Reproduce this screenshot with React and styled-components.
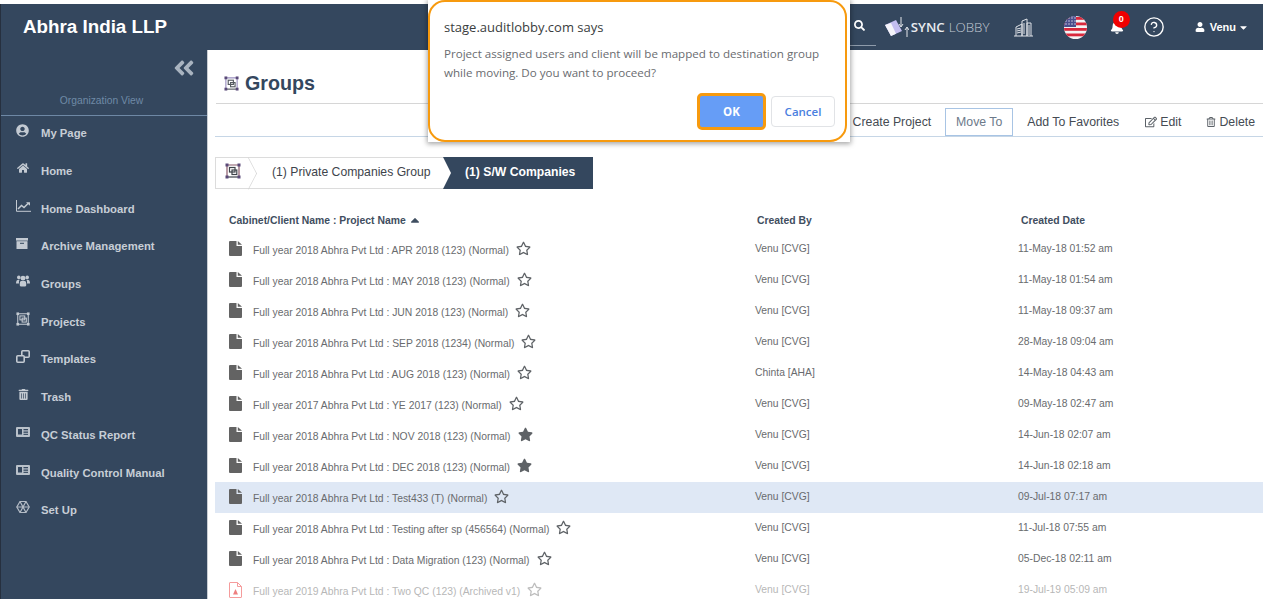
import styled, {createGlobalStyle} from 'styled-components';
import {FaUserCircle, FaHome, FaTrashAlt, FaSearch, FaBell, FaUser, FaCaretDown, FaCaretUp, FaStar, FaRegStar, FaAngleDoubleLeft, FaRegEdit, FaRegTrashAlt} from 'react-icons/fa';
import {CircleHelp} from 'lucide-react';

const navy = '#34475e';
const navIconColor = '#c3cad2';

const GlobalStyle = createGlobalStyle`
  html, body {
    margin: 0;
    height: 100%;
    overflow: hidden;
    background: #fff;
    font-family: "Liberation Sans", Arial, sans-serif;
  }
`

const Page = styled.div`
  position: relative;
  width: 1263px;
  height: 599px;
  padding-top: 4px;
  box-sizing: border-box;
  overflow: hidden;
  display: flex;
  flex-direction: column;
`

const Header = styled.header`
  flex: 0 0 46px;
  display: flex;
  align-items: center;
  background: ${navy};
  border-left: 1px solid #26303f;
  color: #fff;
  padding-left: 22px;
`

const Brand = styled.div`
  font-size: 18.8px;
  font-weight: 700;
  width: 400px;
`

const HeaderTools = styled.div`
  margin-left: auto;
  display: flex;
  align-items: center;
  height: 100%;
`

const SearchBox = styled.div`
  width: 37px;
  height: 37px;
  box-sizing: border-box;
  border-bottom: 1px solid #8e9bab;
  display: flex;
  align-items: center;
  justify-content: flex-end;
  padding: 0 11px 3px 0;
  font-size: 11px;
  margin: 0 8px 0 0;
`

const SyncLogo = styled.div`
  display: flex;
  align-items: center;
  font-family: "Open Sans", sans-serif;
  font-size: 13.3px;
  font-weight: 600;
  width: 108px;
  color: #e8ebef;
  span { font-weight: 300; color: #c4cbd4; margin-left: 4px; }
  svg { margin-right: 2px; }
`

const ToolIcon = styled.div`
  position: relative;
  display: flex;
  align-items: center;
  justify-content: center;
  margin-left: ${props => props.$gap}px;
  font-size: ${props => props.$size || 16}px;
`

const Badge = styled.div`
  position: absolute;
  top: -9px;
  left: 3px;
  width: 17px;
  height: 17px;
  border-radius: 50%;
  background: #f00000;
  color: #fff;
  font-size: 9px;
  font-weight: 700;
  line-height: 17px;
  text-align: center;
`

const UserMenu = styled.div`
  display: flex;
  align-items: center;
  gap: 4px;
  margin: 0 14px 0 30px;
  font-size: 11px;
  font-weight: 700;
  svg:first-child { font-size: 10px; margin-right: 1px; }
  svg:last-child { font-size: 11px; margin-left: -2px; }
`

const Body = styled.div`
  flex: 1;
  display: flex;
  min-height: 0;
`

const Sidebar = styled.aside`
  flex: 0 0 207px;
  box-sizing: border-box;
  background: ${navy};
  border-left: 1px solid #26303f;
  color: #c4ccd5;
`

const Collapse = styled.div`
  height: 37px;
  box-sizing: border-box;
  padding: 0 11px 2px 0;
  display: flex;
  justify-content: flex-end;
  align-items: center;
  font-size: 24px;
  color: #a9b4c0;
`

const OrgView = styled.div`
  height: 29px;
  box-sizing: border-box;
  border-bottom: 1px solid #6e88a5;
  padding-right: 5px;
  text-align: center;
  font-size: 10.3px;
  line-height: 28px;
  color: #6f8aa6;
`

const NavList = styled.nav`
  margin-top: -1.5px;
`

const NavItem = styled.div`
  height: 37.7px;
  display: flex;
  align-items: center;
  padding-left: 15px;
  font-size: 11.3px;
  font-weight: 700;
  color: #c7ced6;
`

const NavIcon = styled.span`
  width: 25px;
  flex: none;
  display: flex;
  position: relative;
  top: -3px;
  font-size: 12px;
  color: ${navIconColor};
`

const Main = styled.main`
  flex: 1;
  min-width: 0;
  padding-left: 7px;
  border-left: 1px solid #c9ced4;
`

const TitleBar = styled.div`
  height: 54px;
  box-sizing: border-box;
  padding: 22px 0 0 8px;
  margin-left: 1px;
  display: flex;
  align-items: flex-start;
  gap: 6px;
  border-bottom: 1px solid #d6d6d6;
  svg { margin-top: 4px; }
`

const Title = styled.h1`
  margin: 0;
  font-size: 19.7px;
  line-height: 22px;
  font-weight: 700;
  color: ${navy};
`

const Toolbar = styled.div`
  height: 33px;
  box-sizing: border-box;
  padding: 3px 8px 0 0;
  border-bottom: 1px solid #c6d6e6;
  display: flex;
  justify-content: flex-end;
  align-items: center;
  font-size: 12.3px;
  color: #454b53;
`

const ToolButton = styled.div`
  display: flex;
  align-items: center;
  gap: 3px;
  margin-left: ${props => props.$gap}px;
  svg { font-size: 12px; color: #5c6268; }
`

const MoveTo = styled.div`
  box-sizing: border-box;
  height: 28px;
  width: 68px;
  line-height: 26px;
  text-align: center;
  margin-left: 14px;
  border: 1px solid #a8c4e4;
  color: #6d7a8a;
`

const Crumbs = styled.div`
  margin-top: 20px;
  width: 378px;
  height: 32px;
  box-sizing: border-box;
  display: flex;
  border: 1px solid #dcdcdc;
  font-size: 12.2px;
  color: #3e444b;
`

const CrumbHome = styled.div`
  position: relative;
  width: 34px;
  flex: none;
  display: flex;
  align-items: center;
  padding: 0 0 5px 9px;
  box-sizing: border-box;
  &::after {
    content: '';
    position: absolute;
    right: -10px;
    top: 4px;
    width: 22px;
    height: 22px;
    border-top: 1px solid #d4d4d4;
    border-right: 1px solid #d4d4d4;
    transform: scaleX(0.52) rotate(45deg);
  }
`

const CrumbLink = styled.div`
  width: 193px;
  line-height: 29px;
  padding-left: 22px;
  box-sizing: border-box;
`

const CrumbActive = styled.div`
  flex: 1;
  background: ${navy};
  color: #fff;
  font-weight: 700;
  padding-left: 22px;
  clip-path: polygon(0 0, 100% 0, 100% 100%, 0 100%, 8px 50%);
  margin: -1px -1px -1px 0;
  line-height: 31px;
`

const TableHead = styled.div`
  display: grid;
  grid-template-columns: 528px 264px 1fr;
  margin-top: 18px;
  padding: 0 0 1px 14px;
  box-sizing: border-box;
  height: 27px;
  font-size: 10.4px;
  font-weight: 700;
  color: #3f4e60;
  align-items: center;
`

const SortName = styled.div`
  display: flex;
  align-items: center;
  gap: 2px;
  svg { font-size: 14px; }
`

const Row = styled.div`
  display: grid;
  grid-template-columns: 526px 263px 1fr;
  height: 31px;
  align-items: center;
  padding-left: 14px;
  background: ${props => props.$selected ? '#dfe8f5' : 'transparent'};
  font-size: 10.35px;
  color: ${props => props.$archived ? '#b7b7b7' : '#696b6e'};
`

const NameCell = styled.div`
  display: flex;
  align-items: center;
  padding-top: 2px;
`

const MetaCell = styled.div`
  padding-bottom: 2px;
`

const DocIcon = styled.span`
  width: 24px;
  flex: none;
  display: flex;
  position: relative;
  top: -2px;
`

const StarIcon = styled.span`
  display: flex;
  margin-left: 7px;
  position: relative;
  top: -2px;
  font-size: 15px;
  color: ${props => props.$archived ? '#bdbdbd' : '#5e6266'};
`

const Dialog = styled.div`
  position: absolute;
  left: 428px;
  top: 0;
  width: 422px;
  height: 142px;
  box-sizing: border-box;
  padding-right: 3px;
  background: #fff;
  box-shadow: 0 1px 5px 1px rgba(0,0,0,0.35);
`

const DialogRing = styled.div`
  height: 100%;
  box-sizing: border-box;
  border: 2px solid #f79a0e;
  border-radius: 17px;
  padding: 16px 10px 0 14px;
  font-family: "Open Sans", sans-serif;
`

const DialogTitle = styled.div`
  font-size: 13px;
  line-height: 18px;
  color: #3a3d40;
`

const DialogText = styled.div`
  margin-top: 9px;
  font-size: 11.6px;
  line-height: 18.5px;
  color: #6a6c70;
  white-space: nowrap;
`

const DialogActions = styled.div`
  margin-top: 11px;
  display: flex;
  justify-content: flex-end;
  align-items: center;
  gap: 5px;
`

const OkButton = styled.div`
  box-sizing: border-box;
  width: 69px;
  height: 37px;
  border: 3px solid #f79a0e;
  border-radius: 5px;
  background: #669df6;
  color: #fff;
  font-size: 11.5px;
  font-weight: 700;
  line-height: 31px;
  text-align: center;
`

const CancelButton = styled.div`
  box-sizing: border-box;
  width: 64px;
  height: 31px;
  border: 1px solid #e1e3e6;
  border-radius: 4px;
  color: #4a80e0;
  font-size: 11.5px;
  font-weight: 600;
  line-height: 29px;
  text-align: center;
`

const GroupGlyph = ({size = 14, color = '#4a4f55', accent}) => (
  <svg width={size} height={size} viewBox="0 0 16 16" fill="none" stroke={color} strokeWidth="1.2">
    <path d="M2 2h12M2 2v12M14 2v12" stroke={accent || color}/>
    <path d="M2 14h12"/>
    <rect x="4.5" y="4.5" width="5.5" height="4.5"/>
    <rect x="7" y="7" width="4.8" height="4.5"/>
    <g fill={accent ? '#5a4a78' : color} stroke="none">
      <rect x="0.5" y="0.5" width="3" height="3"/>
      <rect x="12.5" y="0.5" width="3" height="3"/>
      <rect x="0.5" y="12.5" width="3" height="3"/>
      <rect x="12.5" y="12.5" width="3" height="3"/>
    </g>
  </svg>
);

const ChartGlyph = () => (
  <svg width="15" height="12" viewBox="0 0 15 12" fill="none" stroke={navIconColor}>
    <path d="M.5 0v11.3H15" strokeWidth="1"/>
    <path d="M2 9l3.5-3.5 2.5 2L12.5 3" strokeWidth="1.5"/>
    <path d="M10 2.2h4v3.6z" fill={navIconColor} stroke="none"/>
  </svg>
);

const ArchiveGlyph = () => (
  <svg width="12" height="11" viewBox="0 0 12 11">
    <rect width="12" height="2.6" fill={navIconColor}/>
    <rect x="0.5" y="3.2" width="11" height="7.8" fill={navIconColor}/>
    <rect x="4" y="4.8" width="4" height="1" fill={navy}/>
  </svg>
);

const UsersGlyph = () => (
  <svg width="14" height="12" viewBox="0 0 14 12" fill={navIconColor}>
    <circle cx="2.8" cy="2.4" r="1.8"/>
    <circle cx="11.2" cy="2.4" r="1.8"/>
    <circle cx="7" cy="3.2" r="2.4"/>
    <path d="M0 8.2q0-3.4 2.8-3.4h.8Q2.6 6 3 8.6H.6q-.6 0-.6-.4zM14 8.2q0-3.4-2.8-3.4h-.8q1 1.2.6 3.8h2.4q.6 0 .6-.4zM3.8 10.4Q3.4 6 5.4 6h3.2q2 0 1.6 4.4 0 1.1-1.4 1.1H5.2q-1.4 0-1.4-1.1z"/>
  </svg>
);

const CardGlyph = () => (
  <svg width="14" height="10" viewBox="0 0 14 10">
    <rect width="14" height="10" rx="1" fill="#b9c1ca"/>
    <rect x="2" y="2" width="4" height="5.5" fill={navy}/>
    <rect x="7.5" y="2" width="4.5" height="1.3" fill={navy}/>
    <rect x="7.5" y="4.5" width="4.5" height="1.3" fill={navy}/>
    <rect x="7.5" y="6.8" width="4.5" height="1.1" fill={navy}/>
  </svg>
);

const TemplateGlyph = () => (
  <svg width="14" height="13" viewBox="0 0 14 13" fill="none" stroke={navIconColor} strokeWidth="1.6">
    <rect x="5.8" y="0.8" width="7.4" height="6.4" rx="1"/>
    <rect x="0.8" y="5.8" width="7.4" height="6.4" rx="1" fill={navy}/>
  </svg>
);

const SetUpGlyph = () => (
  <svg width="14" height="14" viewBox="0 0 14 14" fill="none" stroke="#b4bcc6" strokeWidth="1.2">
    <path d="M4 1.5h6L13.2 7 10 12.5H4L.8 7z"/>
    <path d="M4 1.5 10 12.5M10 1.5 4 12.5M.8 7h12.4"/>
  </svg>
);

const DocGlyph = () => (
  <svg width="13" height="15" viewBox="0 0 13 15">
    <path d="M0 1q0-1 1-1h6.5v5H13v9q0 1-1 1H1q-1 0-1-1zM8.8 0 13 3.8H8.8z" fill="#636363"/>
  </svg>
);

const PdfGlyph = () => (
  <svg width="13" height="16" viewBox="0 0 13 16" fill="none" stroke="#f59c9c">
    <path d="M.5 1q0-.5.5-.5h7.5l4 4V15q0 .5-.5.5H1q-.5 0-.5-.5zM8.5.5v4h4"/>
    <path d="M6.5 7 9 12.5H4z" fill="#ee7f7f" stroke="none"/>
  </svg>
);

const SyncMark = () => (
  <svg width="25" height="21" viewBox="0 0 25 21">
    <path d="M1 8 12 3l6 11-11 5z" fill="#c3bdf0"/>
    <path d="M1 8l6 11 5-2.3L7 6z" fill="#f4f4fa"/>
    <path d="M17 0v9M15 7l2 3 2-3M23 20v-9M21 13l2-3 2 3" stroke="#e4e7ea" strokeWidth="1" fill="none"/>
  </svg>
);

const BuildingGlyph = () => (
  <svg width="21" height="19" viewBox="0 0 21 19" fill="none" stroke="#dfe3e8" strokeWidth="1">
    <path d="M1 18h19M3 18V9l6-3v12M9 18V3l5-2v17M14 18V5h4v13"/>
    <path d="M4 11l4-1M4 13l4-1M4 15l4-1M11 5v11M16 7v10"/>
  </svg>
);

const FlagGlyph = () => (
  <svg width="23" height="23" viewBox="0 0 23 23">
    <defs>
      <clipPath id="flagClip"><circle cx="11.5" cy="11.5" r="11.5"/></clipPath>
    </defs>
    <g clipPath="url(#flagClip)">
      <rect width="23" height="23" fill="#f4f4f4"/>
      {[0,1,2,3].map(i => <rect key={i} y={1 + i * 5.5} width="23" height="2.8" fill="#d8283c"/>)}
      <rect y="0" width="12" height="11" fill="#4a4e8c"/>
      {[2,5,8].map(y => [2,5,8,11].map(x => <circle key={x + '-' + y} cx={x} cy={y} r="0.7" fill="#e6e6f2"/>))}
    </g>
  </svg>
);

const navItems = [
  {label: 'My Page', icon: <FaUserCircle size={13}/>},
  {label: 'Home', icon: <FaHome style={{marginLeft: 1}}/>},
  {label: 'Home Dashboard', icon: <ChartGlyph/>},
  {label: 'Archive Management', icon: <ArchiveGlyph/>},
  {label: 'Groups', icon: <UsersGlyph/>},
  {label: 'Projects', icon: <GroupGlyph color={navIconColor}/>},
  {label: 'Templates', icon: <TemplateGlyph/>},
  {label: 'Trash', icon: <FaTrashAlt size={11} style={{marginLeft: 2}}/>},
  {label: 'QC Status Report', icon: <CardGlyph/>},
  {label: 'Quality Control Manual', icon: <CardGlyph/>},
  {label: 'Set Up', icon: <SetUpGlyph/>},
];

const rows = [
  {name: 'Full year 2018 Abhra Pvt Ltd : APR 2018 (123) (Normal)', by: 'Venu [CVG]', date: '11-May-18 01:52 am'},
  {name: 'Full year 2018 Abhra Pvt Ltd : MAY 2018 (123) (Normal)', by: 'Venu [CVG]', date: '11-May-18 01:54 am'},
  {name: 'Full year 2018 Abhra Pvt Ltd : JUN 2018 (123) (Normal)', by: 'Venu [CVG]', date: '11-May-18 09:37 am'},
  {name: 'Full year 2018 Abhra Pvt Ltd : SEP 2018 (1234) (Normal)', by: 'Venu [CVG]', date: '28-May-18 09:04 am'},
  {name: 'Full year 2018 Abhra Pvt Ltd : AUG 2018 (123) (Normal)', by: 'Chinta [AHA]', date: '14-May-18 04:43 am'},
  {name: 'Full year 2017 Abhra Pvt Ltd : YE 2017 (123) (Normal)', by: 'Venu [CVG]', date: '09-May-18 02:47 am'},
  {name: 'Full year 2018 Abhra Pvt Ltd : NOV 2018 (123) (Normal)', by: 'Venu [CVG]', date: '14-Jun-18 02:07 am', fav: true},
  {name: 'Full year 2018 Abhra Pvt Ltd : DEC 2018 (123) (Normal)', by: 'Venu [CVG]', date: '14-Jun-18 02:18 am', fav: true},
  {name: 'Full year 2018 Abhra Pvt Ltd : Test433 (T) (Normal)', by: 'Venu [CVG]', date: '09-Jul-18 07:17 am', selected: true},
  {name: 'Full year 2018 Abhra Pvt Ltd : Testing after sp (456564) (Normal)', by: 'Venu [CVG]', date: '11-Jul-18 07:55 am'},
  {name: 'Full year 2018 Abhra Pvt Ltd : Data Migration (123) (Normal)', by: 'Venu [CVG]', date: '05-Dec-18 02:11 am'},
  {name: 'Full year 2019 Abhra Pvt Ltd : Two QC (123) (Archived v1)', by: 'Venu [CVG]', date: '19-Jul-19 05:09 am', archived: true},
];

const App = () => {
  return (
    <Page>
      <GlobalStyle/>
      <Header>
        <Brand>Abhra India LLP</Brand>
        <HeaderTools>
          <SearchBox><FaSearch/></SearchBox>
          <SyncLogo><SyncMark/>SYNC<span>LOBBY</span></SyncLogo>
          <ToolIcon $gap={21}><BuildingGlyph/></ToolIcon>
          <ToolIcon $gap={30}><FlagGlyph/></ToolIcon>
          <ToolIcon $gap={23} $size={14}><FaBell/><Badge>0</Badge></ToolIcon>
          <ToolIcon $gap={19}><CircleHelp size={22} strokeWidth={1.5}/></ToolIcon>
          <UserMenu><FaUser/>Venu<FaCaretDown/></UserMenu>
        </HeaderTools>
      </Header>
      <Body>
        <Sidebar>
          <Collapse><FaAngleDoubleLeft/></Collapse>
          <OrgView>Organization View</OrgView>
          <NavList>
            {navItems.map(item => (
              <NavItem key={item.label}>
                <NavIcon>{item.icon}</NavIcon>
                {item.label}
              </NavItem>
            ))}
          </NavList>
        </Sidebar>
        <Main>
          <TitleBar>
            <GroupGlyph size={15} color="#555a60" accent="#9a8fc0"/>
            <Title>Groups</Title>
          </TitleBar>
          <Toolbar>
            <ToolButton>Create Project</ToolButton>
            <MoveTo>Move To</MoveTo>
            <ToolButton $gap={14}>Add To Favorites</ToolButton>
            <ToolButton $gap={26}><FaRegEdit/>Edit</ToolButton>
            <ToolButton $gap={25}><FaRegTrashAlt size={10}/>Delete</ToolButton>
          </Toolbar>
          <Crumbs>
            <CrumbHome><GroupGlyph size={16} color="#3f444a" accent="#8a5a6a"/></CrumbHome>
            <CrumbLink>(1) Private Companies Group</CrumbLink>
            <CrumbActive>(1) S/W Companies</CrumbActive>
          </Crumbs>
          <TableHead>
            <SortName>Cabinet/Client Name : Project Name <FaCaretUp/></SortName>
            <div>Created By</div>
            <div>Created Date</div>
          </TableHead>
          {rows.map(row => (
            <Row key={row.date} $selected={row.selected} $archived={row.archived}>
              <NameCell>
                <DocIcon>{row.archived ? <PdfGlyph/> : <DocGlyph/>}</DocIcon>
                {row.name}
                <StarIcon $archived={row.archived}>{row.fav ? <FaStar/> : <FaRegStar/>}</StarIcon>
              </NameCell>
              <MetaCell>{row.by}</MetaCell>
              <MetaCell>{row.date}</MetaCell>
            </Row>
          ))}
        </Main>
      </Body>
      <Dialog>
        <DialogRing>
          <DialogTitle>stage.auditlobby.com says</DialogTitle>
          <DialogText>
            Project assigned users and client will be mapped to destination group<br/>
            while moving. Do you want to proceed?
          </DialogText>
          <DialogActions>
            <OkButton>OK</OkButton>
            <CancelButton>Cancel</CancelButton>
          </DialogActions>
        </DialogRing>
      </Dialog>
    </Page>
  );
}

export default App;
